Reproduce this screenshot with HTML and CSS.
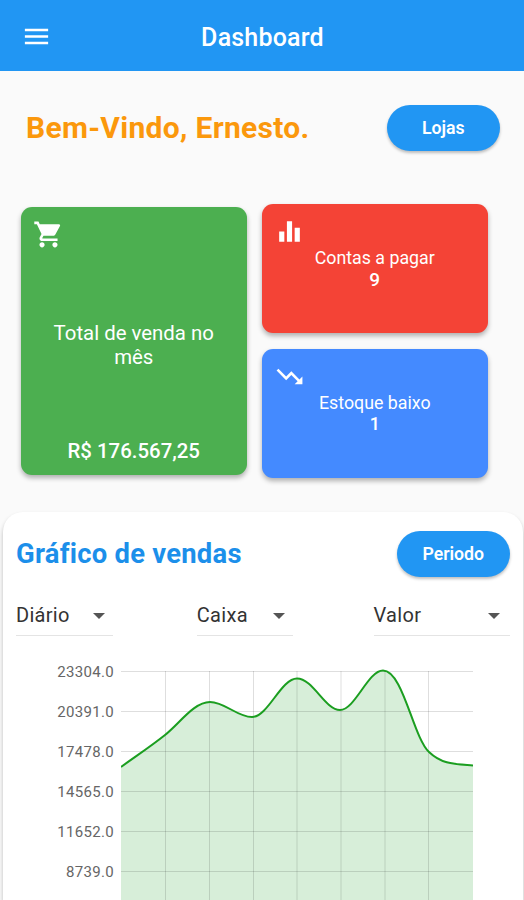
FILE: index.html
```
<!DOCTYPE html>
<html lang="pt-BR">

<head>
    <meta charset="UTF-8">
    <meta name="viewport" content="width=device-width, initial-scale=1.0">
    <title>Dashboard</title>
    <link rel="stylesheet" href="styles.css">
</head>

<body>
    <header class="topbar">
        <svg class="icon" viewBox="0 0 24 24"><path d="M3 18h18v-2H3v2zm0-5h18v-2H3v2zm0-7v2h18V6H3z"/></svg>
        <h1>Dashboard</h1>
    </header>

    <section class="welcome">
        <h2>Bem-Vindo, Ernesto.</h2>
        <button class="btn">Lojas</button>
    </section>

    <section class="cards">
        <div class="card card-green">
            <svg class="icon" viewBox="0 0 24 24"><path d="M7 18c-1.1 0-1.99.9-1.99 2S5.900 22 7 22s2-.9 2-2-.9-2-2-2zM1 2v2h2l3.600 7.590-1.350 2.450c-.16.28-.25.61-.25.960 0 1.100.9 2 2 2h12v-2H7.420c-.14 0-.25-.11-.25-.25l.03-.12.9-1.630h7.450c.75 0 1.410-.41 1.750-1.030l3.580-6.490c.08-.14.12-.31.12-.48 0-.55-.45-1-1-1H5.210l-.94-2H1zm16 16c-1.100 0-1.990.9-1.990 2s.89 2 1.990 2 2-.9 2-2-.9-2-2-2z"/></svg>
            <p class="label">Total de venda no mês</p>
            <p class="value">R$ 176.567,25</p>
        </div>
        <div class="column">
            <div class="card card-red">
                <svg class="icon" viewBox="0 0 24 24"><path d="M10 20h4V4h-4v16zm-6 0h4v-8H4v8zM16 9v11h4V9h-4z"/></svg>
                <p class="label">Contas a pagar</p>
                <p class="value">9</p>
            </div>
            <div class="card card-blue">
                <svg class="icon" viewBox="0 0 24 24"><path d="M16 18l2.290-2.290-4.880-4.880-4 4L2 7.410 3.410 6l6 6 4-4 6.300 6.290L22 12v6z"/></svg>
                <p class="label">Estoque baixo</p>
                <p class="value">1</p>
            </div>
        </div>
    </section>

    <section class="panel">
        <div class="panel-head">
            <h2>Gráfico de vendas</h2>
            <button class="btn">Periodo</button>
        </div>
        <div class="filters">
            <div class="select"><span>Diário</span><i class="arrow"></i></div>
            <div class="select select-small"><span>Caixa</span><i class="arrow"></i></div>
            <div class="select select-wide"><span>Valor</span><i class="arrow"></i></div>
        </div>
        <div class="chart">
            <div class="axis">
                <span>23304.0</span>
                <span>20391.0</span>
                <span>17478.0</span>
                <span>14565.0</span>
                <span>11652.0</span>
                <span>8739.0</span>
            </div>
            <svg class="plot" viewBox="0 0 352 234">
                <path class="area" d="M0 101C15 90 29 81 44 69C59 57 73 36 89 36C104 36 116 51 131 51C147 51 160 12.500 176 12.500C192 12.500 204 44 219 44C234 44 247 4.500 262 4.500C282 4.500 292 71 308 86C321 98.500 334 98 352 99.500V234H0z"/>
                <path class="grid" d="M0 5.500H352M0 45.500H352M0 85.500H352M0 125.500H352M0 165.500H352M0 205.500H352"/>
                <path class="grid" d="M44.500 5V234M88.500 5V234M132.500 5V234M176 5V234M220 5V234M264 5V234M307.500 5V234"/>
                <path class="line" d="M0 101C15 90 29 81 44 69C59 57 73 36 89 36C104 36 116 51 131 51C147 51 160 12.500 176 12.500C192 12.500 204 44 219 44C234 44 247 4.500 262 4.500C282 4.500 292 71 308 86C321 98.500 334 98 352 99.500"/>
            </svg>
        </div>
    </section>
</body>

</html>
```
FILE: styles.css
```
* {
    box-sizing: border-box;
}
body {
    margin: 0;
    height: 900px;
    overflow: hidden;
    background-color: #fafafa;
    font-family: Roboto, "Liberation Sans", sans-serif;
}
h1, h2, p {
    margin: 0;
}
.icon {
    display: block;
    width: 31px;
    height: 31px;
    fill: #fff;
}

/* header */
.topbar {
    display: grid;
    grid-template-columns: 31px 1fr 31px;
    align-items: center;
    height: 71px;
    padding: 2px 20px 0 21px;
    background-color: #2196f3;
    color: #fff;
}
.topbar h1 {
    padding-top: 2px;
    font-size: 25px;
    font-weight: 500;
    line-height: 30px;
    text-align: center;
    letter-spacing: 0.2px;
}
.welcome {
    display: flex;
    justify-content: space-between;
    align-items: center;
    height: 114px;
    padding: 0 24.5px 0 26px;
}
.welcome h2 {
    color: #fb980c;
    font-size: 30px;
    font-weight: 700;
    line-height: 36px;
    letter-spacing: 0.3px;
}
.btn {
    width: 112.5px;
    height: 46px;
    padding: 0;
    border: 0;
    border-radius: 23px;
    background-color: #2196f3;
    box-shadow: 0 2px 3px rgba(0, 0, 0, 0.25);
    color: #fff;
    font-family: inherit;
    font-size: 17.7px;
    font-weight: 600;
}

/* cards */
.cards {
    display: flex;
    align-items: center;
    gap: 15.5px;
    height: 274px;
    margin-top: 19px;
    padding-left: 21px;
}
.column {
    display: flex;
    flex-direction: column;
    gap: 16px;
}
.card {
    width: 225.5px;
    height: 129px;
    padding: 12px;
    border-radius: 11px;
    box-shadow: 0 3px 5px rgba(0, 0, 0, 0.3);
    color: #fff;
    font-size: 17.8px;
    line-height: 22px;
    text-align: center;
}
.card .value {
    font-weight: 500;
}
.card-green {
    display: flex;
    flex-direction: column;
    justify-content: space-between;
    height: 268.5px;
    background-color: #4caf50;
    font-size: 20.4px;
    line-height: 24px;
}
.card-green .label {
    padding: 0 14px;
}
.card-red {
    background-color: #f44336;
}
.card-red .value {
    font-size: 19px;
}
.card-blue {
    background-color: #448aff;
}
.card-blue .value {
    line-height: 20px;
}

/* chart panel */
.panel {
    width: 520px;
    height: 388px;
    margin: 34px 0 0 3px;
    padding: 19px 13.5px 0 13px;
    border-radius: 20px 20px 0 0;
    background-color: #fff;
    box-shadow: 0 3px 4px rgba(0, 0, 0, 0.25);
}
.panel-head {
    display: flex;
    justify-content: space-between;
    align-items: center;
}
.panel-head h2 {
    color: #1c8fea;
    font-size: 27.4px;
    font-weight: 700;
    line-height: 34px;
    letter-spacing: 0.25px;
}
.filters {
    display: flex;
    justify-content: space-between;
    margin-top: 17px;
}
.select {
    display: flex;
    justify-content: space-between;
    align-items: center;
    width: 97px;
    height: 42px;
    padding: 0 8px 0 0;
    border-bottom: 1px solid #e4e4e4;
    color: #333;
    font-size: 20px;
    letter-spacing: 0.3px;
}
.select-small {
    width: 96px;
    margin-left: 3px;
}
.select-wide {
    width: 136px;
    padding-right: 10px;
}
.arrow {
    margin-top: 2px;
    border: 6px solid transparent;
    border-top-color: #555;
    border-bottom: 0;
}
.chart {
    display: flex;
    margin-top: 30px;
}
.axis {
    display: flex;
    flex-direction: column;
    width: 105px;
    height: 240px;
    padding-right: 7px;
    margin-top: -14px;
    color: #666;
    font-size: 15px;
    line-height: 40px;
    text-align: right;
    letter-spacing: 0.3px;
}
.plot {
    width: 352px;
    height: 234px;
}
.plot path {
    fill: none;
}
.plot .area {
    fill: #d7eed9;
}
.plot .grid {
    stroke: rgba(0, 0, 0, 0.13);
}
.plot .line {
    stroke: #1b9e20;
    stroke-width: 2;
}
```
